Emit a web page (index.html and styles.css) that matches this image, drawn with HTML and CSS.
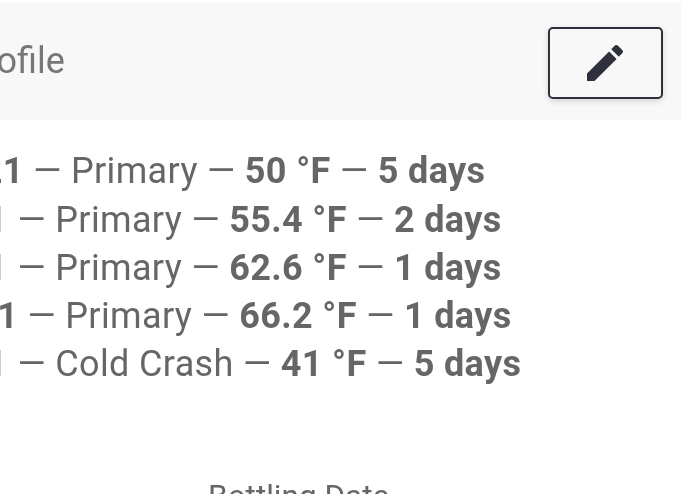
FILE: index.html
```
<!DOCTYPE html>
<html>
<head>
    <meta charset="utf-8">
    <title>Fermentation Profile</title>
    <link rel="stylesheet" href="styles.css">
</head>
<body>
    <div class="card">
        <div class="card-header">
            <span class="card-title">ofile</span>
            <button class="edit-button" aria-label="Edit">
                <svg class="edit-icon" viewBox="0 0 24 24">
                    <path d="M3 17.25V21h3.75L17.81 9.94l-3.75-3.75L3 17.25zM20.71 7.04a1 1 0 0 0 0-1.41l-2.34-2.34a1 1 0 0 0-1.41 0l-1.83 1.83 3.75 3.75 1.83-1.83z"/>
                </svg>
            </button>
        </div>
        <div class="profile">
            <div class="step step-first"><b>21</b> — Primary — <b>50 °F</b> — <b>5 days</b></div>
            <div class="step"><span>1</span> — Primary — <b>55.4 °F</b> — <b>2 days</b></div>
            <div class="step"><span>1</span> — Primary — <b>62.6 °F</b> — <b>1 days</b></div>
            <div class="step step-wide"><b>1</b> — Primary — <b>66.2 °F</b> — <b>1 days</b></div>
            <div class="step"><span>1</span> — Cold Crash — <b>41 °F</b> — <b>5 days</b></div>
        </div>
        <div class="field-label">Bottling Date</div>
    </div>
</body>
</html>
```
FILE: styles.css
```
body {
    margin: 0;
    overflow: hidden;
    background-color: #fff;
    color: #666;
    font-family: Roboto, sans-serif;
}

.card {
    width: 681px;
    height: 494px;
    overflow: hidden;
    will-change: transform;
}

.card-header {
    display: flex;
    justify-content: space-between;
    align-items: center;
    box-sizing: border-box;
    height: 118px;
    margin-top: 2px;
    padding-right: 18px;
    padding-top: 4px;
    background-color: #f8f8f8;
}

.card-title {
    margin: -4px 0 0 -3.6px;
    font-size: 36px;
    color: #777;
}

.edit-button {
    display: flex;
    justify-content: center;
    align-items: center;
    box-sizing: border-box;
    width: 115px;
    height: 72px;
    padding: 0 2px 0 0;
    border: 2px solid #2f303d;
    border-radius: 5px;
    background-color: #f8f8f8;
    box-shadow: 0 2px 6px rgba(0, 0, 0, 0.15);
}

.edit-icon {
    width: 48px;
    height: 48px;
    fill: #2f303d;
}

.profile {
    padding-top: 27.3px;
}

.step {
    margin-left: -12.4px;
    font-size: 36px;
    line-height: 48.25px;
    letter-spacing: 0.36px;
    white-space: nowrap;
}

.step-first {
    margin-left: -18.2px;
}

.step-wide {
    margin-left: -2.8px;
}

.field-label {
    margin: 89.3px 0 0 208px;
    font-size: 31.5px;
}
```
